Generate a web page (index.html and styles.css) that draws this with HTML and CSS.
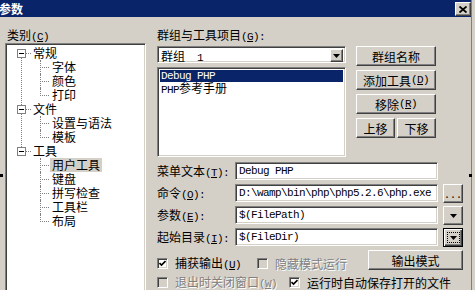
FILE: index.html
```html
<!DOCTYPE html>
<html lang="zh-CN">
<head>
<meta charset="utf-8">
<title>参数</title>
<link rel="stylesheet" href="styles.css">
</head>
<body>
<div class="win">
  <div class="main">
    <div class="titlebar">
      <span class="title">参数</span>
      <span class="close"><svg width="8" height="7" viewBox="0 0 8 7"><path d="M0.5 0.5 L7.5 6.5 M7.5 0.5 L0.5 6.5" stroke="#000" stroke-width="1.8" fill="none"/></svg></span>
    </div>
    <div class="content">
      <div class="left">
        <div class="cap">类别<span class="m">(<u>C</u>)</span></div>
        <div class="tree sunken">
          <ul class="nodes">
            <li class="node">
              <div class="row"><span class="exp"></span><span class="hl"></span><span class="lbl">常规</span></div>
              <ul class="kids">
                <li><span class="lbl">字体</span></li>
                <li><span class="lbl">颜色</span></li>
                <li><span class="lbl">打印</span></li>
              </ul>
            </li>
            <li class="node">
              <div class="row"><span class="exp"></span><span class="hl"></span><span class="lbl">文件</span></div>
              <ul class="kids">
                <li><span class="lbl">设置与语法</span></li>
                <li><span class="lbl">模板</span></li>
              </ul>
            </li>
            <li class="node">
              <div class="row"><span class="exp"></span><span class="hl"></span><span class="lbl">工具</span></div>
              <ul class="kids">
                <li class="sel"><span class="lbl">用户工具</span></li>
                <li><span class="lbl">键盘</span></li>
                <li><span class="lbl">拼写检查</span></li>
                <li><span class="lbl">工具栏</span></li>
                <li><span class="lbl">布局</span></li>
              </ul>
            </li>
          </ul>
        </div>
      </div>
      <div class="right">
        <div class="cap2">群组与工具项目<span class="m">(<u>G</u>):</span></div>
        <div class="top">
          <div class="lists">
            <div class="combo sunken">
              <span class="val">群组<span class="m">&nbsp;&nbsp;1</span></span>
              <span class="dd raised"><svg width="7" height="4" viewBox="0 0 7 4"><path d="M0 0 H7 L3.5 4 Z" fill="#000"/></svg></span>
            </div>
            <div class="listbox sunken">
              <div class="item on m">Debug PHP</div>
              <div class="item"><span class="m">PHP</span>参考手册</div>
            </div>
          </div>
          <div class="btns">
            <div class="btn raised">群组名称</div>
            <div class="btn raised">添加工具<span class="m">(<u>D</u>)</span></div>
            <div class="btn raised">移除<span class="m">(<u>R</u>)</span></div>
            <div class="pair">
              <div class="btn raised">上移</div>
              <div class="btn raised">下移</div>
            </div>
          </div>
        </div>
        <div class="form">
          <div class="frow">
            <span class="flbl">菜单文本<span class="m">(<u>T</u>):</span></span>
            <div class="field sunken m">Debug PHP</div>
          </div>
          <div class="frow">
            <span class="flbl">命令<span class="m">(<u>O</u>):</span></span>
            <div class="field sunken m">D:\wamp\bin\php\php5.2.6\php.exe</div>
            <div class="sbtn raised"><span class="dots m">...</span></div>
          </div>
          <div class="frow">
            <span class="flbl">参数<span class="m">(<u>E</u>):</span></span>
            <div class="field sunken m">$(FilePath)</div>
            <div class="sbtn raised"><svg width="7" height="4" viewBox="0 0 7 4"><path d="M0 0 H7 L3.5 4 Z" fill="#000"/></svg></div>
          </div>
          <div class="frow">
            <span class="flbl">起始目录<span class="m">(<u>I</u>):</span></span>
            <div class="field sunken m">$(FileDir)</div>
            <div class="sbtn focus"><span class="frect"><svg width="7" height="4" viewBox="0 0 7 4"><path d="M0 0 H7 L3.5 4 Z" fill="#000"/></svg></span></div>
          </div>
        </div>
        <div class="opts r1">
          <label class="chk g1"><span class="cb sunken"><svg width="7" height="7" viewBox="0 0 7 7"><path d="M0.5 3 L2.5 5 L6.5 1" stroke="#000" stroke-width="1.6" fill="none"/></svg></span><span>捕获输出<span class="m">(<u>U</u>)</span></span></label>
          <label class="chk dis"><span class="cb sunken"></span><span>隐藏模式运行</span></label>
          <div class="btn raised wide">输出模式</div>
        </div>
        <div class="opts r2">
          <label class="chk g2 dis"><span class="cb sunken"></span><span>退出时关闭窗口<span class="m">(<u>W</u>)</span></span></label>
          <label class="chk"><span class="cb sunken"><svg width="7" height="7" viewBox="0 0 7 7"><path d="M0.5 3 L2.5 5 L6.5 1" stroke="#000" stroke-width="1.6" fill="none"/></svg></span><span>运行时自动保存打开的文件</span></label>
        </div>
      </div>
    </div>
  </div>
  <div class="edge"></div>
  <span class="grip gl"></span>
  <span class="grip gr"></span>
</div>
</body>
</html>
```
FILE: styles.css
```css
* { box-sizing: border-box; margin: 0; padding: 0; }
body {
  margin: 0;
  background: #d4d0c8;
  font-family: "Noto Sans CJK SC", "Liberation Sans", sans-serif;
  font-size: 12px;
  line-height: 13px;
  color: #000;
}
ul { list-style: none; }
u { text-decoration: underline; text-underline-offset: 1px; }
.m {
  font-family: "Liberation Mono", "Noto Sans CJK SC", monospace;
  font-size: 11px;
  letter-spacing: -0.6px;
}
.win {
  width: 475px;
  height: 290px;
  overflow: hidden;
  display: flex;
  position: relative;
  background: #d4d0c8;
}
.main { width: 471px; display: flex; flex-direction: column; }
.edge { width: 4px; border-left: 1px solid #808080; background: #d4d0c8; }
.grip { position: absolute; width: 3px; height: 3px; background: #000; top: 174px; }
.gl { left: 0; }
.gr { left: 469px; }

.sunken {
  background: #fff;
  border: 1px solid;
  border-color: #808080 #fff #fff #808080;
  box-shadow: inset 1px 1px 0 #404040, inset -1px -1px 0 #d4d0c8;
}
.raised {
  background: #d4d0c8;
  border: 1px solid;
  border-color: #fff #404040 #404040 #fff;
  box-shadow: inset -1px -1px 0 #808080;
}

.titlebar {
  height: 17px;
  background: #0a246a;
  display: flex;
  justify-content: space-between;
  align-items: flex-start;
}
.title { color: #fff; font-weight: bold; line-height: 17px; margin-left: -1px; }
.close {
  margin-top: 2px;
  width: 16px;
  height: 14px;
  background: #d4d0c8;
  border: 1px solid;
  border-color: #fff #404040 #404040 #fff;
  box-shadow: inset -1px -1px 0 #808080;
  display: flex;
  align-items: center;
  justify-content: center;
}

.content { display: flex; padding: 11px 0 0 5px; flex: 1; }
.left { width: 141px; }
.cap { padding-left: 2px; height: 13px; margin-bottom: 2px; }
.tree { height: 260px; padding: 2px 2px 0; }
.tree .nodes { padding: 0; }
.node { position: relative; }
.node:not(:last-child)::before {
  content: "";
  position: absolute;
  left: 13px;
  top: 7px;
  bottom: -7px;
  border-left: 1px dotted #808080;
}
.row { display: flex; align-items: center; height: 14px; padding-left: 9px; }
.exp {
  width: 9px;
  height: 9px;
  border: 1px solid #808080;
  background: #fff;
  position: relative;
  z-index: 1;
}
.exp::before {
  content: "";
  position: absolute;
  left: 1px;
  top: 3px;
  width: 5px;
  height: 1px;
  background: #000;
}
.hl { width: 5px; height: 0; border-top: 1px dotted #808080; }
.lbl { padding: 0 2px; line-height: 14px; height: 14px; display: inline-block; }
.kids li { position: relative; height: 14px; padding-left: 42px; }
.kids li::before {
  content: "";
  position: absolute;
  left: 32px;
  top: 0;
  bottom: 0;
  border-left: 1px dotted #808080;
}
.kids li:last-child::before { bottom: auto; height: 8px; }
.kids li::after {
  content: "";
  position: absolute;
  left: 34px;
  top: 7px;
  width: 7px;
  border-top: 1px dotted #808080;
}
.kids li.sel .lbl { background: #d4d0c8; }

.right { margin-left: 11px; width: 306px; }
.cap2 { height: 13px; margin-bottom: 5px; }
.top { display: grid; grid-template-columns: 189px 80px; column-gap: 10px; }
.combo { height: 17px; display: flex; padding: 2px; }
.combo .val { flex: 1; padding-left: 1px; line-height: 13px; }
.combo .dd { width: 13px; height: 13px; display: flex; align-items: center; justify-content: center; }
.listbox { margin-top: 4px; height: 90px; padding: 2px; }
.item { height: 12px; line-height: 12px; padding-left: 1px; white-space: nowrap; }
.item.on { background: #0a246a; color: #fff; }
.btns { display: flex; flex-direction: column; gap: 4px; }
.btn {
  height: 20px;
  display: flex;
  align-items: center;
  justify-content: center;
  line-height: 13px;
}
.pair { display: flex; gap: 2px; }
.pair .btn { flex: 1; }

.form { margin-top: 5px; }
.frow { display: flex; height: 18px; margin-bottom: 4px; align-items: flex-start; }
.flbl { width: 78px; line-height: 18px; white-space: nowrap; }
.field { width: 203px; height: 18px; padding: 2px 0 0 3px; line-height: 13px; white-space: nowrap; overflow: hidden; }
.sbtn {
  margin-left: 5px;
  width: 20px;
  height: 19px;
  display: flex;
  align-items: center;
  justify-content: center;
}
.dots { line-height: 10px; padding-top: 4px; letter-spacing: 0; font-size: 10px; }
.focus {
  background: #d4d0c8;
  border: 1px solid #000;
  box-shadow: inset 1px 1px 0 #fff, inset -1px -1px 0 #404040, inset -2px -2px 0 #808080;
}
.frect {
  width: 13px;
  height: 11px;
  border: 1px dotted #000;
  display: flex;
  align-items: center;
  justify-content: center;
}

.opts { display: flex; align-items: flex-start; }
.r1 { height: 21px; margin-top: 3px; }
.r1 .chk { margin-top: 7px; }
.r2 .chk { margin-top: 5px; }
.chk { display: flex; align-items: center; height: 13px; gap: 7px; white-space: nowrap; }
.g1 { width: 100px; }
.g2 { width: 132px; }
.cb {
  width: 11px;
  height: 11px;
  display: flex;
  align-items: center;
  justify-content: center;
  flex: none;
}
.dis { color: #808080; text-shadow: 1px 1px 0 #fff; }
.dis .cb { background: #d4d0c8; }
.wide { margin-left: auto; width: 95px; }
```
